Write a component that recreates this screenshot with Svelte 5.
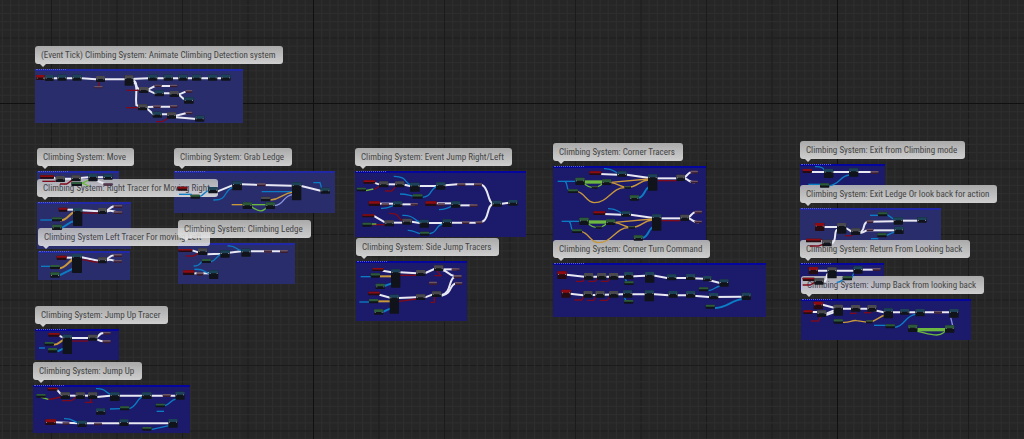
<script lang="ts">
  type Tone = 'soft' | 'deep';

  interface Comment {
    title: string;
    x: number;
    y: number;
    tone: Tone;
    w: number;
    h: number;
  }

  interface Graph {
    x: number;
    y: number;
    nodes: string;
    wires: string;
  }

  // x / y is the corner of the bubble, w / h the size of the box below it
  const comments: Comment[] = [
    { title: '(Event Tick) Climbing System: Animate Climbing Detection system', x: 35, y: 46, tone: 'soft', w: 208, h: 54 },
    { title: 'Climbing System: Move', x: 37, y: 148, tone: 'soft', w: 82, h: 18 },
    { title: 'Climbing System: Right Tracer for Moving Right', x: 37, y: 179, tone: 'soft', w: 94, h: 47 },
    { title: 'Climbing System Left Tracer For moving Left', x: 38, y: 228, tone: 'soft', w: 92, h: 29 },
    { title: 'Climbing System: Grab Ledge', x: 174, y: 148, tone: 'soft', w: 161, h: 42 },
    { title: 'Climbing System: Climbing Ledge', x: 178, y: 220, tone: 'soft', w: 117, h: 41 },
    { title: 'Climbing System: Event Jump Right/Left', x: 355, y: 148, tone: 'deep', w: 171, h: 66 },
    { title: 'Climbing System: Side Jump Tracers', x: 356, y: 238, tone: 'deep', w: 111, h: 60 },
    { title: 'Climbing System: Corner Tracers', x: 553, y: 143, tone: 'deep', w: 153, h: 76 },
    { title: 'Climbing System: Corner Turn Command', x: 553, y: 240, tone: 'deep', w: 213, h: 54 },
    { title: 'Climbing System: Exit from Climbing mode', x: 800, y: 141, tone: 'deep', w: 85, h: 25 },
    { title: 'Climbing System: Exit Ledge Or look back for action', x: 800, y: 185, tone: 'soft', w: 141, h: 38 },
    { title: 'Climbing System: Return From Looking back', x: 800, y: 240, tone: 'deep', w: 84, h: 27 },
    { title: 'Climbing System: Jump Back from looking back', x: 801, y: 276, tone: 'deep', w: 170, h: 41 },
    { title: 'Climbing System: Jump Up Tracer', x: 35, y: 306, tone: 'deep', w: 84, h: 31 },
    { title: 'Climbing System: Jump Up', x: 33, y: 362, tone: 'deep', w: 157, h: 48 }
  ];

  const cornerTracer = {
    nodes: 'r 133 94 36 11,b 217 94 28 16,g 91 113 28 22,g 171 118 28 17,g 69 148 30 11,b 309 103 28 49,k 394 104 26 19,s 437 92 22 9,s 437 122 22 8,g 254 166 28 16,t 140 138 18 8,t 238 138 20 8',
    wires: 'w M165 102L217 104,w M245 104L309 113,w M337 115H395,w M420 112C435 96 430 97 450 96,w M420 115C436 122 430 127 450 127,c M38 124H92,c M60 124C70 130 62 150 75 152,c M177 86C205 85 205 95 220 100,C M280 174C300 170 295 150 313 140,G M118 126H172,g M118 132C135 145 150 148 172 132,y M197 127L310 117,y M197 128C220 130 225 142 245 142C280 142 280 122 310 120,y M98 155C120 160 125 188 148 188C190 188 200 142 240 143,r M337 122H395'
  };

  // graph units are a third of a screen pixel; node = kind x y w h, wire = kind path
  const graphs: Graph[] = [
    {
      x: 20, y: 35,
      nodes: 'r 48 120 26 15,b 75 120 26 18,b 112 119 28 18,b 157 119 28 18,k 228 123 27 18,k 314 121 26 31,b 384 119 28 18,b 431 119 28 18,b 475 119 28 18,b 516 119 28 18,b 564 119 28 18,b 603 119 29 18,s 222 153 26 7,k 357 156 28 18,s 403 149 22 7,s 450 149 22 8,b 404 166 28 18,k 449 168 28 18,s 497 165 20 8,b 492 187 29 19,k 354 208 28 18,s 400 211 22 8,s 450 210 22 9,b 398 230 28 18,k 441 232 27 19,s 497 230 20 8,b 525 242 28 18',
      wires: 'w M70 130H185L228 133H314L384 130H603,w M340 137C356 140 340 160 362 164,w M342 142C356 150 345 175 349 210L360 215,w M385 163L405 153H460,w M385 166L404 175H450L478 178L497 170,w M478 180L492 193,w M382 216L405 215H460,w M380 220L400 238H440L468 242L500 234,w M468 247L530 252,r M320 166H360,r M318 218H355,r M408 260H428L444 249,r M238 142L236 155'
    },
    {
      x: 25, y: 140,
      nodes: 'r 45 106 42 10,k 92 108 28 18,k 139 106 28 18,b 190 102 28 22,b 235 103 28 16,g 139 126 32 12,s 235 130 28 7,r 101 203 26 12,b 144 204 28 54,k 219 204 26 18,s 266 195 26 9,s 266 214 26 8,g 81 232 30 12,g 81 254 30 16,r 95 347 30 13,b 141 342 30 57,k 219 352 26 18,s 266 342 25 9,s 266 360 25 8,g 75 375 30 12,g 76 397 28 16',
      wires: 'w M85 112L95 116H140L190 112H236,w M215 122L240 132,r M52 124H92,r M105 132L125 132L145 118,g M170 130L192 120,g M168 128L192 138,w M125 209H145,w M170 211L220 214,w M245 213C262 200 258 198 280 198,w M245 215C262 206 262 217 280 217,r M170 219H222,Y M105 242C125 242 130 225 148 215,c M46 240H85,C M108 264C125 258 130 245 150 243,w M123 353H142,w M170 352L220 362,w M245 358C262 345 258 346 280 346,w M245 361C262 355 262 364 280 364,r M170 360C190 358 200 368 220 366,Y M102 385C120 385 130 365 145 357,c M48 379H78,C M103 406L150 383'
    },
    {
      x: 165, y: 140,
      nodes: 'r 37 140 30 12,b 130 141 28 19,b 202 124 29 27,s 276 130 26 9,b 381 127 28 54,b 467 143 28 18,k 288 170 28 14,g 233 187 28 20,g 302 187 28 20,g 77 164 28 12,r 40 327 42 9,k 99 325 28 20,b 166 331 28 22,b 229 326 28 24,s 297 330 24 8,s 345 330 24 9,g 110 357 28 12,r 54 391 34 14,s 95 397 20 10,b 132 391 28 26',
      wires: 'w M158 154L202 136,w M230 133L380 137,w M409 138L467 152,c M42 163H80,c M103 170C120 165 118 152 134 152,c M145 180C190 182 175 150 204 142,c M290 155H385,c M445 128H465L470 145,y M316 180C350 178 350 160 385 156,l M328 197C360 195 350 168 385 163,y M200 194H235,g M260 194H304,g M260 200C280 215 295 218 306 200,w M82 331L100 337,w M127 343L166 341L229 334H360,r M62 348H85L100 340,c M188 318C215 316 210 330 232 333,c M86 378C110 378 104 365 115 362,c M136 366C155 362 155 345 168 344,w M86 400H135,c M88 388C120 386 115 396 135 402'
    },
    {
      x: 345, y: 140,
      nodes: 'r 55 121 36 10,k 102 124 28 18,k 150 124 28 18,b 195 128 29 27,b 273 127 28 22,s 337 130 24 8,s 387 130 24 8,g 35 143 28 11,g 203 163 30 13,r 71 184 34 14,s 110 190 22 9,b 144 184 28 17,s 197 189 22 8,r 241 184 34 14,s 278 190 22 9,b 318 184 28 19,s 374 193 24 8,b 442 182 28 18,b 490 180 28 17,r 52 223 36 9,k 119 241 28 18,k 172 236 28 18,b 224 239 28 24,b 292 238 28 23,s 351 244 22 8,s 392 244 20 8,g 52 248 28 12,g 225 275 28 12',
      wires: 'w M85 127L102 133,w M130 133H150,w M178 134L195 138H273L337 133H400C435 133 425 190 445 190,w M103 191H146,w M170 193H210,w M273 190H320,w M345 196H385,w M470 191L492 188,w M85 227L120 247,w M147 248H172,w M200 245L224 249H292,w M320 248H395C440 250 420 195 445 192,r M88 148L104 138,r M120 153H140L152 140,r M132 220C165 220 155 232 172 242,r M80 254H120,c M146 109C185 108 180 130 197 135,c M165 162C190 162 190 167 205 168,c M232 172C262 170 255 145 275 140,c M108 205C130 206 135 200 146 196,c M282 209C305 208 312 203 320 198,c M172 226C210 224 205 242 226 246,c M188 271C210 270 210 280 228 281,c M250 281C280 280 270 255 294 252,g M62 152L85 147,g M78 252H94'
    },
    {
      x: 345, y: 235,
      nodes: 'r 82 99 34 9,g 77 115 28 13,g 92 146 28 16,b 138 103 28 55,k 213 105 28 18,k 267 91 28 17,s 320 100 24 7,s 326 120 24 10,s 330 141 22 9,s 252 140 24 10,r 70 170 34 11,g 72 192 28 13,g 87 223 28 16,b 134 179 28 57,k 213 178 28 17,k 261 169 28 17',
      wires: 'w M113 107L140 112,w M165 112L215 115,w M241 114L268 102,w M295 103H335,w M292 105C310 108 310 122 330 124,w M103 179L136 188,w M160 189L215 187,w M240 187L262 179,w M290 180C320 175 310 130 330 125,w M290 182C325 175 310 148 335 145,r M165 121H215,r M275 107L288 122H268,r M162 199L215 192,r M268 186V202H256,Y M103 124H140,Y M98 199H136,c M47 125H80,C M118 153L140 145,c M43 201H75,C M113 231L137 220'
    },
    { x: 545, y: 140, ...cornerTracer },
    { x: 549, y: 180, ...cornerTracer },
    {
      x: 545, y: 235,
      nodes: 'r 37 109 28 23,k 117 114 28 20,k 156 114 28 20,k 192 114 28 20,b 237 111 28 22,b 300 111 28 32,b 366 118 28 18,b 423 117 28 18,b 474 123 26 16,b 523 133 28 22,g 238 139 28 11,g 462 157 28 12,r 49 164 28 24,k 115 168 28 20,k 151 168 28 20,k 192 168 28 20,b 234 166 28 22,b 299 166 28 33,b 370 168 28 20,b 423 168 28 20,b 492 174 28 19,b 590 173 28 22,g 237 195 28 11,g 482 209 28 12',
      wires: 'w M65 119L118 125H237L300 122H330L366 129H425L476 131L525 144,r M92 139H113L120 130,r M130 139H150L158 130,r M168 139H188L195 130,c M240 130L246 142,c M490 167C510 165 510 155 525 153,w M75 176L115 181L234 178H330L370 181H425L492 186L590 185,r M88 195H110L117 185,r M126 196H146L153 185,r M164 196H187L194 185,c M237 184L243 198,C M510 219C545 220 560 195 592 192'
    },
    {
      x: 790, y: 135,
      nodes: 'r 38 102 28 12,b 102 102 28 27,b 177 100 28 25,s 242 108 24 9,g 90 145 28 13,r 75 264 28 24,k 141 264 28 32,k 183 280 28 20,s 230 256 20 8,s 230 281 20 8,g 264 232 28 12,b 311 247 28 22,b 382 247 28 16,g 262 295 28 12,b 313 275 28 22,r 48 311 46 11,k 97 314 28 20',
      wires: 'w M62 111H245,c M75 95C105 93 100 105 105 108,c M55 148H92,c M118 152C150 148 150 122 178 120,w M103 276H142,w M168 279L185 290,w M210 292C228 288 215 260 235 260,w M210 294C228 290 222 287 235 286,w M235 260L312 259,w M338 257H383,w M235 286H315,w M92 318H100,w M125 325C142 320 130 285 142 284,r M165 302H188,r M60 333H85L100 328,c M240 241H265,c M290 238L315 255,c M243 311H265,c M288 302L315 290'
    },
    {
      x: 790, y: 235,
      nodes: 'r 56 96 28 22,k 112 97 28 33,b 190 94 28 22,s 248 99 24 9,g 158 124 28 12,r 38 128 36 10,k 73 129 28 20,r 71 200 28 23,k 131 209 28 33,r 40 226 28 11,k 81 226 28 20,k 183 210 28 20,k 232 210 28 20,b 281 220 28 30,b 330 222 28 17,b 376 222 28 22,s 432 228 24 8,b 478 222 28 26,g 131 253 28 13,t 228 255 20 10,g 287 268 28 12,g 354 269 28 22,g 465 271 28 22',
      wires: 'w M83 107H192,w M215 104H255,w M100 140C115 138 105 118 115 115,r M38 150H60L75 142,c M140 142C155 142 155 135 160 133,c M185 130L192 112,w M98 209L132 218,w M66 231H82,w M108 236L132 226,w M108 240L132 232,w M158 221H233L281 232H478,r M63 258H85L92 245,r M180 235H200,r M222 233H244,y M158 262C180 264 185 254 200 257L235 262C260 260 265 245 285 240,c M252 271H288,c M314 277C345 275 345 240 378 238,l M482 247L488 272,G M382 284H468,g M382 289C400 292 420 300 440 300S455 294 468 288'
    },
    {
      x: 20, y: 300,
      nodes: 'r 85 99 34 11,g 74 126 28 11,g 84 144 28 14,b 128 104 28 58,k 204 104 28 18,s 250 96 22 8,s 248 120 24 10,r 83 263 30 9,g 49 282 28 11,k 122 277 28 20,k 167 277 28 20,k 204 277 28 20,b 270 277 29 26,b 366 277 29 20,s 428 282 24 9,b 466 275 28 24,g 300 319 28 12,g 407 311 28 11,b 228 325 28 19,r 76 358 32 17,s 128 366 20 9,b 172 362 28 19,s 222 368 24 8,b 298 358 28 20,b 445 357 28 26,g 367 381 28 11',
      wires: 'w M117 107L130 113,w M155 114H205,w M230 113C245 98 240 100 258 99,w M230 118C245 125 240 124 258 124,Y M100 134C118 134 118 124 130 120,c M57 144H75,C M110 154C120 152 122 147 130 147,r M155 123H205,w M110 268L124 284,w M150 287H205,w M230 291L270 287H470,w M105 367L175 370H447,r M85 298C105 298 105 293 124 291,r M126 302H155L168 292,r M195 307H218M212 307V295,g M62 291L85 298,c M228 266C258 264 255 278 272 283,c M270 327L302 326,c M327 326C350 322 350 295 368 290,c M432 318C450 315 450 300 468 297,c M410 334H432,c M132 356C160 355 158 365 174 368,c M392 389L447 377'
    }
  ];

  const wireKinds: Record<string, string> = {
    w: 'exec', r: 'bool', c: 'object', C: 'object thick', y: 'vector', Y: 'vector thick',
    g: 'float', G: 'float band', l: 'rotator'
  };
  const nodeKinds: Record<string, string> = {
    r: 'event', b: 'call', k: 'flow', g: 'pure', s: 'setter', t: 'math'
  };

  function parseNodes(src: string) {
    return src.split(',').map((item) => {
      const [kind, x, y, w, h] = item.split(' ');
      return { kind: nodeKinds[kind], x: +x, y: +y, w: +w, h: +h };
    });
  }

  function parseWires(src: string) {
    return src.split(',').map((item) => ({ kind: wireKinds[item[0]], d: item.slice(2) }));
  }

  // 64 minor cells make one tile: every 8th line is major, the first is the origin line
  const tile = 524;
  const lines = Array.from({ length: 64 }, (_, i) => ({
    at: (i * tile) / 64,
    kind: i === 0 ? 'origin' : i % 8 === 0 ? 'major' : 'minor'
  })).reverse();
</script>

<main class="canvas">
  <svg class="layer" aria-hidden="true">
    <defs>
      <pattern id="grid" x="313" y="103" width={tile} height={tile} patternUnits="userSpaceOnUse">
        {#each lines as line}
          <rect class={line.kind} x={line.at} y="0" width="1" height={tile} />
          <rect class={line.kind} x="0" y={line.at} width={tile} height="1" />
        {/each}
      </pattern>
    </defs>
    <rect width="100%" height="100%" fill="url(#grid)" />
  </svg>

  {#each comments as c}
    <section class="comment" style="left: {c.x}px; top: {c.y}px">
      <h2 class="bubble">{c.title}</h2>
      <div class="box {c.tone}" style="width: {c.w}px; height: {c.h}px"></div>
    </section>
  {/each}

  <svg class="layer graphs" aria-hidden="true">
    {#each graphs as graph}
      <g transform="translate({graph.x} {graph.y}) scale({1 / 3})">
        {#each parseWires(graph.wires) as wire}
          <path class="wire {wire.kind}" d={wire.d} />
        {/each}
        {#each parseNodes(graph.nodes) as n}
          <g class="node {n.kind}">
            <rect class="body" x={n.x} y={n.y} width={n.w} height={n.h} rx="2" />
            <rect class="head" x={n.x} y={n.y} width={n.w} height={Math.min(9, n.h / 2)} rx="2" />
            {#if n.h > 14}
              <rect class="pin" x={n.x + 2} y={n.y + 8} width="3" height="3" />
              <rect class="pin" x={n.x + n.w - 5} y={n.y + 8} width="3" height="3" />
            {/if}
          </g>
        {/each}
      </g>
    {/each}
  </svg>
</main>

<style>
  :global(body) {
    margin: 0;
    background: #262626;
  }

  .canvas {
    position: relative;
    min-height: 100vh;
    overflow: hidden;
    background: #262626;
    font-family: 'Roboto Condensed', Roboto, 'Liberation Sans', sans-serif;
  }

  .layer {
    position: absolute;
    inset: 0;
    width: 100%;
    height: 100%;
    pointer-events: none;
  }

  /* wires and nodes stay readable over the bubbles of neighbouring comments */
  .graphs {
    z-index: 2;
  }

  .minor {
    fill: #2d2d2d;
  }

  .major {
    fill: #1b1b1b;
  }

  .origin {
    fill: #101010;
  }

  .comment {
    position: absolute;
    display: flex;
    flex-direction: column;
    align-items: flex-start;
    gap: 5px;
  }

  .bubble {
    position: relative;
    z-index: 1;
    box-sizing: border-box;
    height: 18px;
    margin: 0;
    padding: 0 8px 0 6px;
    border-radius: 3px;
    background: linear-gradient(#bcbcbc, #e6e6e6);
    color: #484848;
    font-size: 9px;
    font-weight: 400;
    line-height: 18px;
    white-space: nowrap;
    opacity: 0.88;
  }

  .bubble::after {
    content: '';
    position: absolute;
    left: 5px;
    top: 100%;
    border: 3px solid transparent;
    border-top-color: #e6e6e6;
    border-bottom: 0;
  }

  .box {
    position: relative;
    box-sizing: border-box;
    border-top: 2px solid;
  }

  .box::before {
    content: '';
    position: absolute;
    left: 1px;
    top: -2px;
    width: 30px;
    max-width: 40%;
    border-top: 1px dotted #5a60c0;
  }

  .soft {
    border-color: #2128a8;
    background: #2a2d6c;
  }

  .deep {
    border-color: #0505a0;
    background: #1c1a6a;
  }

  .wire {
    fill: none;
    stroke-width: 4;
  }

  .exec {
    stroke: #e8e8f4;
    stroke-width: 6;
  }

  .bool {
    stroke: #7d0a1c;
  }

  .object {
    stroke: #0c7cc4;
  }

  .vector {
    stroke: #c8983a;
  }

  .float {
    stroke: #6cb840;
  }

  .rotator {
    stroke: #8a94e0;
  }

  .thick {
    stroke-width: 6;
  }

  .band {
    stroke-width: 10;
  }

  .body {
    fill: #10141a;
  }

  .pin {
    fill: #7c828a;
  }

  .call .head {
    fill: #1d4358;
  }

  .flow .head {
    fill: #4a4a4e;
  }

  .pure .head {
    fill: #2c5a3a;
  }

  .event .head {
    fill: #8c0c14;
  }

  .event .body {
    fill: #240c12;
  }

  .setter .head {
    fill: #6a5468;
  }

  .setter .body {
    fill: #3a1c30;
  }

  .math .head {
    fill: #3c5040;
  }
</style>
